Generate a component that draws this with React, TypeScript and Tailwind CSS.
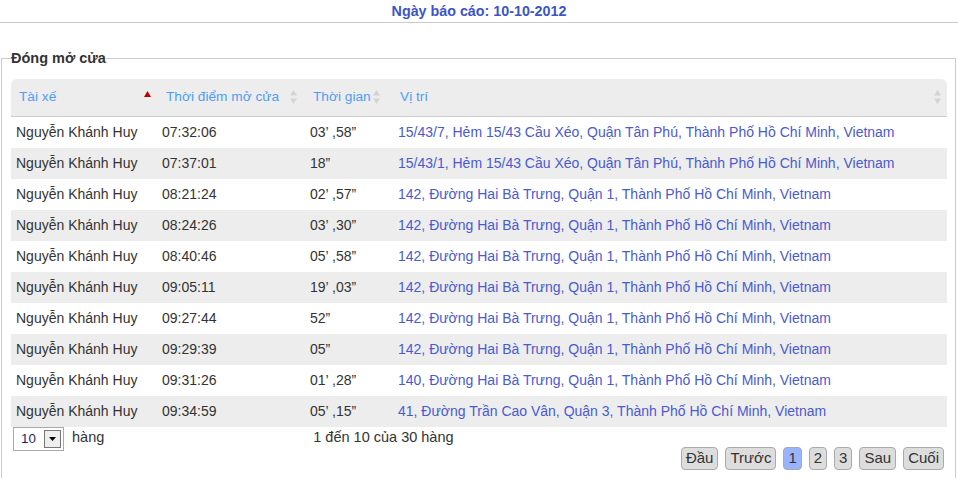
const addrA = "15/43/7, Hẻm 15/43 Cầu Xéo, Quận Tân Phú, Thành Phố Hồ Chí Minh, Vietnam";
const addrB = "15/43/1, Hẻm 15/43 Cầu Xéo, Quận Tân Phú, Thành Phố Hồ Chí Minh, Vietnam";
const addr142 = "142, Đường Hai Bà Trưng, Quận 1, Thành Phố Hồ Chí Minh, Vietnam";

const rows = [
  { time: "07:32:06", dur: "03’ ,58”", place: addrA },
  { time: "07:37:01", dur: "18”", place: addrB },
  { time: "08:21:24", dur: "02’ ,57”", place: addr142 },
  { time: "08:24:26", dur: "03’ ,30”", place: addr142 },
  { time: "08:40:46", dur: "05’ ,58”", place: addr142 },
  { time: "09:05:11", dur: "19’ ,03”", place: addr142 },
  { time: "09:27:44", dur: "52”", place: addr142 },
  { time: "09:29:39", dur: "05”", place: addr142 },
  { time: "09:31:26", dur: "01’ ,28”", place: "140, Đường Hai Bà Trưng, Quận 1, Thành Phố Hồ Chí Minh, Vietnam" },
  { time: "09:34:59", dur: "05’ ,15”", place: "41, Đường Trần Cao Vân, Quận 3, Thành Phố Hồ Chí Minh, Vietnam" },
];

function SortBoth() {
  return (
    <svg width="7" height="14" viewBox="0 0 7 14" className="shrink-0">
      <path d="M3.5 0 L7 5.5 L0 5.5 Z" fill="#d4d4d4" />
      <path d="M0 8.5 L7 8.5 L3.5 14 Z" fill="#d4d4d4" />
    </svg>
  );
}

function SortAsc() {
  return (
    <svg width="7" height="6" viewBox="0 0 7 6" className="shrink-0 mb-[6px]">
      <path d="M3.5 0 L7 6 L0 6 Z" fill="#c00000" />
    </svg>
  );
}

const pages = ["Đầu", "Trước", "1", "2", "3", "Sau", "Cuối"];

export default function App() {
  return (
    <div
      className="w-[958px] h-[478px] bg-white overflow-hidden text-[#333]"
      style={{ fontFamily: '"Liberation Sans", Arial, sans-serif' }}
    >
      <div className="h-[23px] border-b border-[#cccccc] flex justify-center pt-[3px]">
        <span className="text-[14.3px] font-bold text-[#3c55c6] leading-[16px]">Ngày báo cáo: 10-10-2012</span>
      </div>

      <fieldset className="mt-[27px] ml-[1px] w-[955px] h-[440px] border border-[#cccccc] pl-[9px] pr-[8px] pt-[13px]">
        <legend className="p-0 text-[14.5px] font-bold leading-[16px] text-[#333]">Đóng mở cửa</legend>

        <div className="text-[14px]">
          <div className="flex h-[38px] items-center bg-[#ededed] rounded-t-[6px] border-b border-[#cccccc] text-[#4f9ef5] text-[13.7px]">
            <div className="w-[145px] flex items-center justify-between pl-[8px] pr-[5px]">
              <span>Tài xế</span>
              <SortAsc />
            </div>
            <div className="w-[147px] flex items-center justify-between pl-[10px] pr-[6px]">
              <span>Thời điểm mở cửa</span>
              <SortBoth />
            </div>
            <div className="w-[83px] flex items-center justify-between pl-[10px] pr-[6px]">
              <span>Thời gian</span>
              <SortBoth />
            </div>
            <div className="flex-1 flex items-center justify-between pl-[14px] pr-[6px]">
              <span>Vị trí</span>
              <SortBoth />
            </div>
          </div>

          {rows.map((r, i) => (
            <div
              key={i}
              className={`flex h-[31px] items-center ${i % 2 === 1 ? "bg-[#ededed]" : "bg-white"}`}
            >
              <div className="w-[145px] pl-[5px]">Nguyễn Khánh Huy</div>
              <div className="w-[147px] pl-[6px]">{r.time}</div>
              <div className="w-[83px] pl-[7px]">{r.dur}</div>
              <div className="flex-1 pl-[12px] text-[#4a5ad0]">{r.place}</div>
            </div>
          ))}

          <div className="flex items-start">
            <div className="ml-[2px] w-[51px] h-[24px] border border-[#aaaaaa] flex items-center justify-between pl-[7px] pr-[2px] text-[13.33px]">
              <span className="text-[#1f1f66]">10</span>
              <div className="w-[17px] h-[18px] border border-[#777] bg-[#eeeeee] flex items-center justify-center">
                <svg width="7" height="4" viewBox="0 0 7 4">
                  <path d="M0 0 L7 0 L3.5 4 Z" fill="#000" />
                </svg>
              </div>
            </div>
            <span className="ml-[8px] leading-[20px] text-[14.5px]">hàng</span>
            <span className="ml-[209px] leading-[20px] text-[14.5px]">1 đến 10 của 30 hàng</span>
          </div>

          <div className="flex justify-end gap-[7px] pr-[3px] -mt-[4px]">
            {pages.map((p) => (
              <div
                key={p}
                className={`h-[23px] px-[4px] flex items-center text-[15px] border border-[#aaaaaa] rounded-[4px] ${p === "1" ? "bg-[#99b3ff]" : "bg-[#dddddd]"}`}
              >
                {p}
              </div>
            ))}
          </div>
        </div>
      </fieldset>
    </div>
  );
}
